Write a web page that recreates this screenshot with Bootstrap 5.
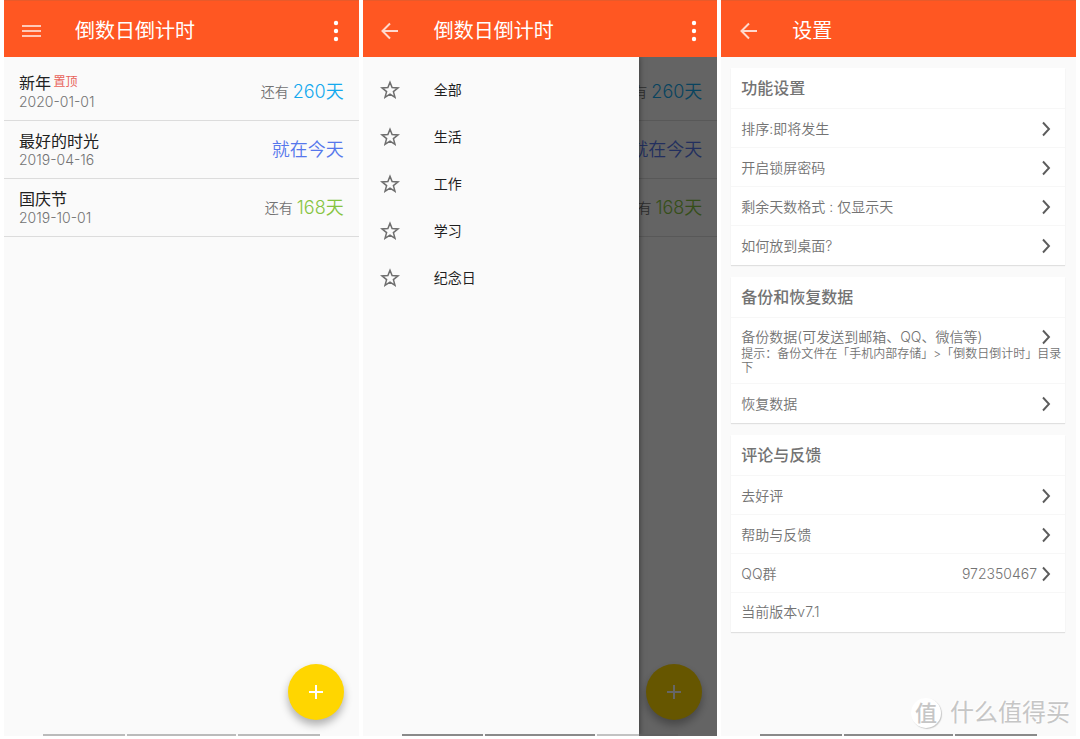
<!DOCTYPE html>
<html lang="zh-CN">
<head>
<meta charset="utf-8">
<meta name="viewport" content="width=device-width, initial-scale=1">
<title>倒数日倒计时</title>
<link href="https://cdn.jsdelivr.net/npm/bootstrap@5.3.0/dist/css/bootstrap.min.css" rel="stylesheet">
<style>
  body { font-family: Inter, "Noto Sans CJK SC", sans-serif; font-size: 14px; line-height: 20px; color: #737373; background: #fff; }
  a { color: inherit; text-decoration: none; }
  .stage { min-height: 100vh; padding: 0 4px 3px; gap: 4px; }
  .phone { flex: 1 1 0; min-width: 0; background: #fafafa; overflow: hidden; }
  .appbar { height: 57px; padding: 4px 13px 0 15px; background: #ff5722; border-top: 1px solid #e85a2a; color: #fff; }
  .appbar h1 { font-size: 20px; line-height: 28px; font-weight: 400; margin: 0 0 0 31px; }
  .tool { width: 25px; height: 28px; padding: 0; border: 0; background: none; color: #fff; display: flex; align-items: center; justify-content: center; }
  .tool-more { width: 20px; }
  .events { padding-top: 6px; }
  .event { height: 58px; padding: 0 15px; border-bottom: 1px solid #dcdcdc; }
  .event-name { font-size: 16px; line-height: 20px; color: #212121; }
  .event-date { font-size: 14px; line-height: 18px; font-weight: 350; }
  .pin { font-size: 12px; color: #e8635a; vertical-align: 3px; line-height: 12px; margin-left: -2px; }
  .left-word { font-weight: 350; }
  .left-days { font-size: 18px; line-height: 24px; font-weight: 350; }
  .c-blue { color: #14a9ee; } .c-indigo { color: #5677ec; } .c-green { color: #86c440; }
  .fab { position: absolute; right: 15px; bottom: 16px; width: 56px; height: 56px; border: 0; border-radius: 50%; background: #ffd600; box-shadow: 0 5px 8px rgba(0,0,0,.3); display: flex; align-items: center; justify-content: center; padding: 0; }
  .shade { position: absolute; inset: 0; background: rgba(0,0,0,.6); }
  .drawer { position: absolute; inset: 0 22% 0 0; background: #fafafa; padding-top: 9px; box-shadow: 0 0 6px rgba(0,0,0,.5); }
  .drawer a { height: 47px; padding-left: 17px; gap: 34px; color: #1f1f1f; }
  .pill-bar { position: absolute; left: 11%; right: 11%; bottom: 0; height: 2px; gap: 2px; }
  .pill-bar i { flex: 3 1 0; background: #bbb; }
  .pill-bar i:nth-child(2) { flex-grow: 4; }
  .pill-dark i { background: #8a8a8a; }
  .settings { padding: 11px 11px 0 10px; gap: 12px; }
  .panel { background: #fff; padding-bottom: 1px; box-shadow: 0 1px 1px rgba(0,0,0,.1); }
  .panel h2 { height: 40px; margin: 0; padding: 0 10px; font-size: 16px; line-height: 41px; font-weight: 500; color: #737373; }
  .setting { min-height: 39px; padding: 9px 14px 8px 10px; border-top: 1px solid #f7f7f7; font-weight: 350; }
  .setting svg { flex: none; }
  .hint { font-size: 12px; line-height: 14px; margin-right: -13px; }
  .brand { position: absolute; right: 6px; bottom: 8px; gap: 9px; color: #c6c6c6; text-shadow: -1px -1px 0 #fff; font-size: 24px; line-height: 30px; }
  .brand-seal { width: 30px; height: 30px; border-radius: 50%; background: #fff; box-shadow: 1px 1px 1px #c8c8c8; font-size: 22px; text-align: center; font-weight: 500; }
</style>
</head>
<body>
<svg width="0" height="0" class="position-absolute" aria-hidden="true">
  <symbol id="i-back" viewBox="0 0 18 18"><path d="M17 9H2M9 1.500 1.500 9 9 16.500" fill="none" stroke="#ffd9cd" stroke-width="2"/></symbol>
  <symbol id="i-more" viewBox="0 0 6 22"><g fill="#fff"><circle cx="3" cy="3" r="2.200"/><circle cx="3" cy="11" r="2.200"/><circle cx="3" cy="19" r="2.200"/></g></symbol>
  <symbol id="i-star" viewBox="0 0 20 20"><path d="M10 2.200 12.100 7.600 18 7.900 13.400 11.600 15 17.400 10 14.200 5 17.400 6.600 11.600 2 7.900 7.900 7.600Z" fill="none" stroke="#6e6e6e" stroke-width="1.500"/></symbol>
  <symbol id="i-next" viewBox="0 0 10 16"><path d="M2 1.500 8 8 2 14.500" fill="none" stroke="#5c5c5c" stroke-width="1.900"/></symbol>
  <symbol id="i-plus" viewBox="0 0 14 14"><path d="M7 0V14M0 7H14" stroke="#fff" stroke-width="2"/></symbol>
</svg>

<div class="stage d-flex">
  <section class="phone d-flex flex-column position-relative">
    <header class="appbar d-flex align-items-center">
      <button class="tool" aria-label="菜单"><svg width="19" height="14"><path d="M0 2H19M0 7H19M0 12H19" stroke="#ffc9b8" stroke-width="2"/></svg></button>
      <h1 class="flex-grow-1">倒数日倒计时</h1>
      <button class="tool tool-more" aria-label="更多"><svg width="6" height="22"><use href="#i-more"/></svg></button>
    </header>
    <main class="events">
      <div class="event d-flex align-items-center justify-content-between">
        <div><div class="event-name">新年 <span class="pin">置顶</span></div><div class="event-date">2020-01-01</div></div>
        <div class="d-flex align-items-center gap-1"><span class="left-word">还有</span><span class="left-days c-blue">260天</span></div>
      </div>
      <div class="event d-flex align-items-center justify-content-between">
        <div><div class="event-name">最好的时光</div><div class="event-date">2019-04-16</div></div>
        <div class="left-days c-indigo">就在今天</div>
      </div>
      <div class="event d-flex align-items-center justify-content-between">
        <div><div class="event-name">国庆节</div><div class="event-date">2019-10-01</div></div>
        <div class="d-flex align-items-center gap-1"><span class="left-word">还有</span><span class="left-days c-green">168天</span></div>
      </div>
    </main>
    <button class="fab" aria-label="添加"><svg width="14" height="14"><use href="#i-plus"/></svg></button>
    <div class="pill-bar d-flex"><i></i><i></i><i></i></div>
  </section>

  <section class="phone d-flex flex-column position-relative">
    <header class="appbar d-flex align-items-center">
      <button class="tool" aria-label="返回"><svg width="18" height="18"><use href="#i-back"/></svg></button>
      <h1 class="flex-grow-1">倒数日倒计时</h1>
      <button class="tool tool-more" aria-label="更多"><svg width="6" height="22"><use href="#i-more"/></svg></button>
    </header>
    <div class="flex-grow-1 position-relative overflow-hidden">
      <div class="events">
        <div class="event d-flex align-items-center justify-content-end gap-1"><span class="left-word">有</span><span class="left-days c-blue">260天</span></div>
        <div class="event d-flex align-items-center justify-content-end"><div class="left-days c-indigo">就在今天</div></div>
        <div class="event d-flex align-items-center justify-content-end gap-1"><span class="left-word">有</span><span class="left-days c-green">168天</span></div>
      </div>
      <button class="fab" aria-label="添加"><svg width="14" height="14"><use href="#i-plus"/></svg></button>
      <div class="pill-bar pill-dark d-flex"><i></i><i></i><i></i></div>
      <div class="shade"></div>
      <nav class="drawer">
        <a href="#" class="d-flex align-items-center"><svg width="20" height="20"><use href="#i-star"/></svg>全部</a>
        <a href="#" class="d-flex align-items-center"><svg width="20" height="20"><use href="#i-star"/></svg>生活</a>
        <a href="#" class="d-flex align-items-center"><svg width="20" height="20"><use href="#i-star"/></svg>工作</a>
        <a href="#" class="d-flex align-items-center"><svg width="20" height="20"><use href="#i-star"/></svg>学习</a>
        <a href="#" class="d-flex align-items-center"><svg width="20" height="20"><use href="#i-star"/></svg>纪念日</a>
      </nav>
      <div class="pill-bar pill-dark d-flex"><i></i><i></i><i class="opacity-50"></i></div>
    </div>
  </section>

  <section class="phone d-flex flex-column position-relative">
    <header class="appbar d-flex align-items-center">
      <button class="tool" aria-label="返回"><svg width="18" height="18"><use href="#i-back"/></svg></button>
      <h1 class="flex-grow-1">设置</h1>
    </header>
    <main class="settings d-flex flex-column">
      <div class="panel">
        <h2>功能设置</h2>
        <a href="#" class="setting d-flex justify-content-between align-items-center">排序:即将发生<svg width="10" height="16"><use href="#i-next"/></svg></a>
        <a href="#" class="setting d-flex justify-content-between align-items-center">开启锁屏密码<svg width="10" height="16"><use href="#i-next"/></svg></a>
        <a href="#" class="setting d-flex justify-content-between align-items-center">剩余天数格式 : 仅显示天<svg width="10" height="16"><use href="#i-next"/></svg></a>
        <a href="#" class="setting d-flex justify-content-between align-items-center">如何放到桌面?<svg width="10" height="16"><use href="#i-next"/></svg></a>
      </div>
      <div class="panel">
        <h2>备份和恢复数据</h2>
        <a href="#" class="setting d-block">
          <div class="d-flex justify-content-between align-items-center">备份数据(可发送到邮箱、QQ、微信等)<svg width="10" height="16"><use href="#i-next"/></svg></div>
          <div class="hint">提示：备份文件在「手机内部存储」&gt;「倒数日倒计时」目录下</div>
        </a>
        <a href="#" class="setting d-flex justify-content-between align-items-center">恢复数据<svg width="10" height="16"><use href="#i-next"/></svg></a>
      </div>
      <div class="panel">
        <h2>评论与反馈</h2>
        <a href="#" class="setting d-flex justify-content-between align-items-center">去好评<svg width="10" height="16"><use href="#i-next"/></svg></a>
        <a href="#" class="setting d-flex justify-content-between align-items-center">帮助与反馈<svg width="10" height="16"><use href="#i-next"/></svg></a>
        <a href="#" class="setting d-flex align-items-center"><span class="flex-grow-1">QQ群</span><span class="me-1">972350467</span><svg width="10" height="16"><use href="#i-next"/></svg></a>
        <div class="setting">当前版本v7.1</div>
      </div>
    </main>
    <div class="brand d-flex align-items-center"><span class="brand-seal">值</span><span>什么值得买</span></div>
    <div class="pill-bar pill-dark d-flex"><i></i><i></i><i></i></div>
  </section>
</div>
<script src="https://cdn.jsdelivr.net/npm/bootstrap@5.3.0/dist/js/bootstrap.bundle.min.js"></script>
</body>
</html>
